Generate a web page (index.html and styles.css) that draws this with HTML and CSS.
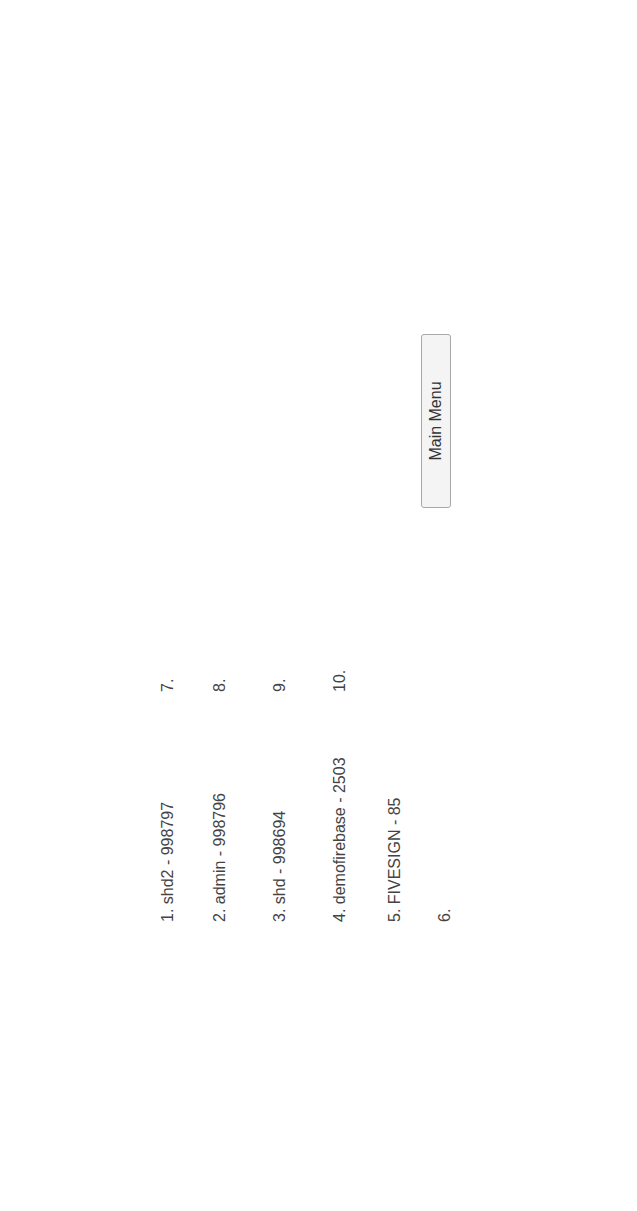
FILE: index.html
```html
<!DOCTYPE html>
<html>
<head>
<meta charset="utf-8">
<link rel="stylesheet" href="styles.css">
</head>
<body>
<div class="stage">
  <div class="canvas">
    <ol class="list">
      <li class="r1 c1">1. shd2 - 998797</li>
      <li class="r2 c1">2. admin - 998796</li>
      <li class="r3 c1">3. shd - 998694</li>
      <li class="r4 c1">4. demofirebase - 2503</li>
      <li class="r5 c1">5. FIVESIGN - 85</li>
      <li class="r6 c1">6.</li>
      <li class="r1 c2">7.</li>
      <li class="r2 c2">8.</li>
      <li class="r3 c2">9.</li>
      <li class="r4 c2">10.</li>
    </ol>
    <button class="menu-btn" type="button">Main Menu</button>
  </div>
</div>
</body>
</html>
```
FILE: styles.css
```css
html, body {
  margin: 0;
  padding: 0;
  background: #fff;
}
.stage {
  width: 637px;
  height: 1211px;
  overflow: hidden;
  position: relative;
}
.canvas {
  width: 1211px;
  height: 637px;
  box-sizing: border-box;
  transform-origin: 0 0;
  transform: translateY(1211px) rotate(-90deg);
  display: flex;
  align-items: flex-start;
  padding-left: 289px;
  font-family: "Liberation Sans", Arial, sans-serif;
  font-size: 16px;
  color: #444;
}
.list {
  list-style: none;
  margin: 159px 0 0 0;
  padding: 0;
  display: grid;
  grid-template-columns: 230px 184px;
  grid-template-rows: 52px 60px 60px 55px 50px 18px;
  line-height: 18px;
}
.list li { white-space: nowrap; }
.c1 { grid-column: 1; }
.c2 { grid-column: 2; }
.r1 { grid-row: 1; }
.r2 { grid-row: 2; }
.r3 { grid-row: 3; }
.r4 { grid-row: 4; }
.r5 { grid-row: 5; }
.r6 { grid-row: 6; }
.menu-btn {
  margin-top: 421px;
  width: 174px;
  height: 30px;
  box-sizing: border-box;
  border: 1px solid #a8a8a8;
  border-radius: 3px;
  background: #f4f4f4;
  font-family: "Liberation Sans", Arial, sans-serif;
  font-size: 16px;
  color: #333;
  padding: 0;
}
```
